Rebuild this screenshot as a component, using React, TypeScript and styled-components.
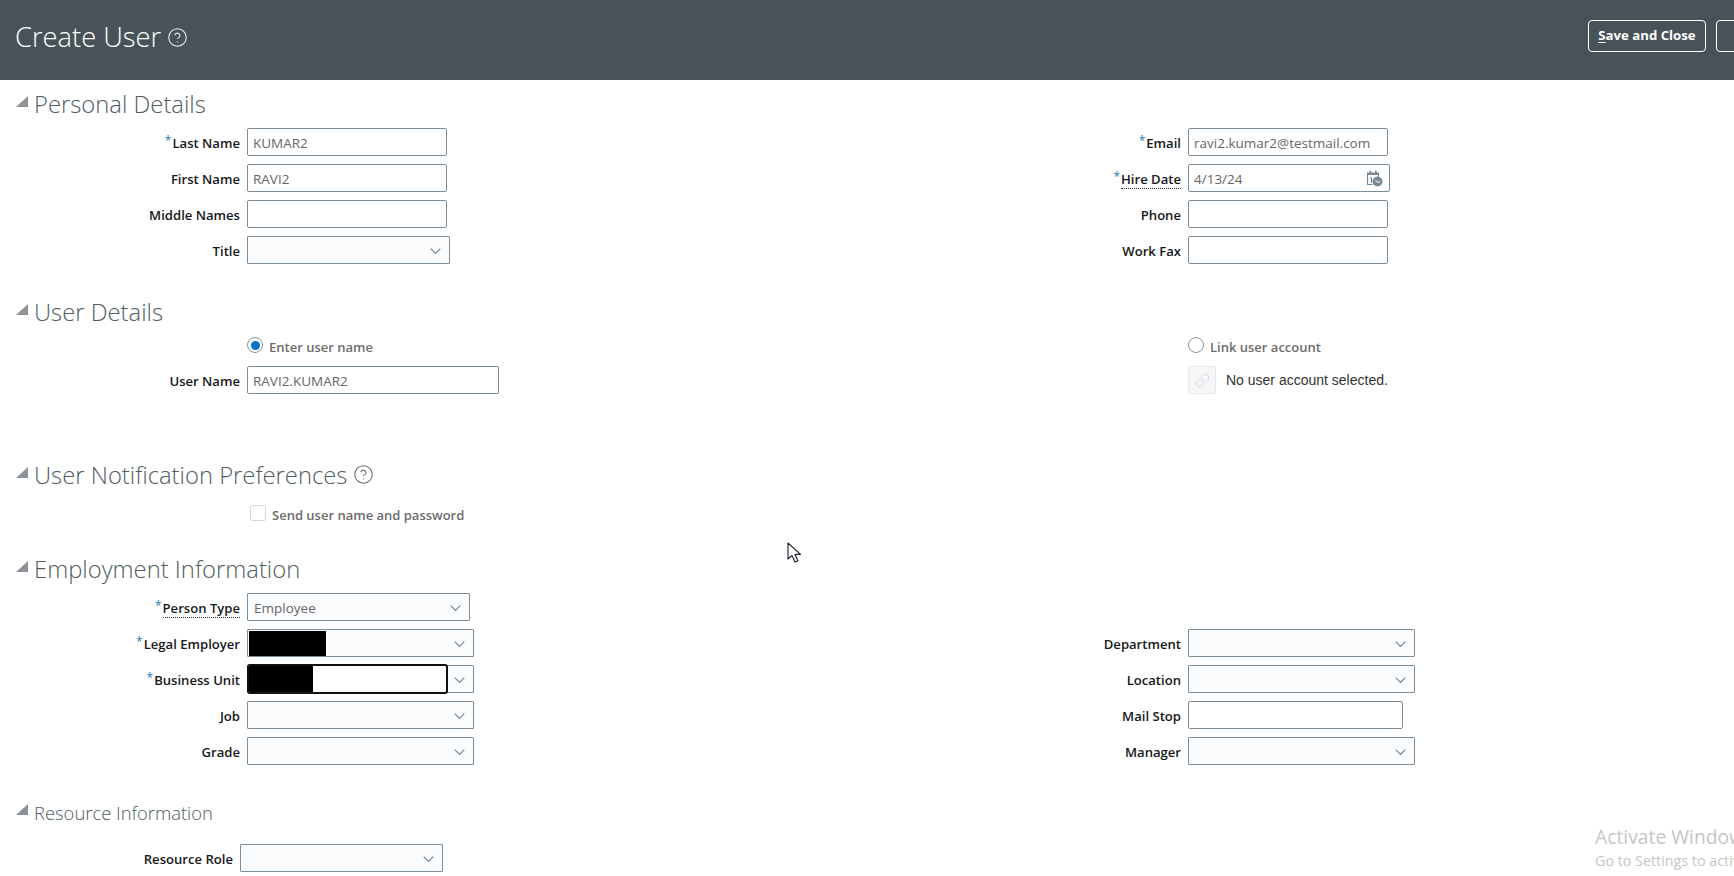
import React from 'react'
import styled, { createGlobalStyle } from 'styled-components'
import { CircleHelp, Link } from 'lucide-react'

const GlobalStyle = createGlobalStyle`
    html, body {
        margin: 0;
        padding: 0;
        background: #fff;
        overflow: hidden;
    }
    body {
        font-family: "Open Sans", "Noto Sans", "Liberation Sans", sans-serif;
    }
`
const Page = styled.div`
    position: relative;
    width: 1734px;
    height: 876px;
    overflow: hidden;
`
const Header = styled.header`
    height: 80px;
    background-color: #485359;
    display: flex;
    align-items: center;
    padding-left: 15px;
    margin-bottom: 9px;
`
const PageTitle = styled.h1`
    margin: 0 6px 0 0;
    font-size: 27.3px;
    font-weight: 300;
    color: #fff;
    line-height: 34px;
    position: relative;
    top: -3px;
`
const TitleHelp = styled(CircleHelp)`
    color: #f2f4f5;
    position: relative;
    top: -3px;
`
const Actions = styled.div`
    margin-left: auto;
    margin-right: -82px;
    display: flex;
    gap: 10px;
    position: relative;
    top: -4px;
`
const HeaderButton = styled.button<{ $width: number }>`
    width: ${(p) => p.$width}px;
    height: 32px;
    box-sizing: border-box;
    background: transparent;
    border: 1px solid #fff;
    border-radius: 4px;
    color: #fff;
    font-family: inherit;
    font-size: 13.2px;
    font-weight: 700;
    padding: 0 0 2px;
    u {
        text-underline-offset: 2px;
    }
`
const SectionHeading = styled.div<{ $top: number; $small?: boolean }>`
    display: flex;
    align-items: center;
    height: 30px;
    margin-top: ${(p) => p.$top}px;
    font-size: ${(p) => (p.$small ? 18.4 : 23.8)}px;
    font-weight: 300;
    color: #4f5c64;
`
const Twisty = styled.svg`
    width: 12px;
    height: 11px;
    margin: -5px 6px 0 16px;
    fill: #8b9398;
    flex-shrink: 0;
`
const HeadingHelp = styled(CircleHelp)`
    color: #5f6b72;
    margin-left: 6px;
    margin-top: -2px;
`
const Columns = styled.div<{ $top: number }>`
    display: flex;
    margin-top: ${(p) => p.$top}px;
`
const Column = styled.div<{ $width?: number }>`
    display: flex;
    flex-direction: column;
    gap: 8px;
    width: ${(p) => (p.$width ? `${p.$width}px` : 'auto')};
    flex-shrink: 0;
`
const Row = styled.div<{ $labelWidth: number }>`
    display: grid;
    grid-template-columns: ${(p) => p.$labelWidth}px auto;
    column-gap: 7px;
    align-items: center;
    justify-content: start;
    min-height: 28px;
`
const Label = styled.label`
    text-align: right;
    font-size: 13.1px;
    font-weight: 600;
    color: #16181a;
    line-height: 18px;
    position: relative;
    top: 1px;
    white-space: nowrap;
`
const Star = styled.span`
    color: #1f78b4;
    font-size: 12px;
    font-weight: 400;
    position: relative;
    top: -3px;
    margin-right: 1px;
`
const Dotted = styled.span`
    border-bottom: 1px dotted #333;
`
const TextBox = styled.div<{ $width: number }>`
    width: ${(p) => p.$width}px;
    height: 28px;
    box-sizing: border-box;
    border: 1px solid #7b8e9b;
    border-radius: 2px;
    background: #fff;
    padding: 0 5px;
    display: flex;
    align-items: center;
    justify-content: space-between;
    font-size: 13.5px;
    color: #666;
`
const ValueText = styled.span`
    position: relative;
    top: 1px;
`
const SelectBox = styled.div<{ $width: number }>`
    width: ${(p) => p.$width}px;
    height: 28px;
    box-sizing: border-box;
    border: 1px solid #7b8e9b;
    border-radius: 1px;
    background: #fbfcfe;
    display: flex;
    align-items: center;
    font-size: 13.5px;
    color: #666;
`
const SelectValue = styled.span`
    flex: 1;
    padding-left: 6px;
    position: relative;
    top: 1px;
`
const Redacted = styled.div`
    width: 77px;
    height: 25px;
    margin-left: 1px;
    background: #000;
`
const RedactedFill = styled.div`
    flex: 1;
`
const FocusedInput = styled.div`
    width: 201px;
    height: 30px;
    box-sizing: border-box;
    margin: -1px 0 -1px -1px;
    flex-shrink: 0;
    border: 2px solid #111;
    border-radius: 3px;
    background: #fff;
    display: flex;
    overflow: hidden;
`
const FocusedBlack = styled.div`
    width: 64px;
    background: #000;
`
const ChevronSvg = styled.svg`
    width: 11px;
    height: 7px;
    margin: 2px 8px 0 auto;
    fill: none;
    stroke: #6f7f8a;
    stroke-width: 1.1;
    flex-shrink: 0;
`
const CalendarSvg = styled.svg`
    width: 17px;
    height: 17px;
    margin-right: 1px;
    flex-shrink: 0;
`
const ChoiceRow = styled.div<{ $indent: number }>`
    display: flex;
    align-items: center;
    gap: 6px;
    height: 22px;
    margin: 0 0 2px ${(p) => p.$indent}px;
    font-size: 13px;
    font-weight: 600;
    color: #6c6c6c;
`
const ChoiceText = styled.span`
    position: relative;
    top: 2px;
`
const Radio = styled.span<{ $on?: boolean }>`
    width: 16px;
    height: 16px;
    box-sizing: border-box;
    border: 1px solid #8597a3;
    border-radius: 50%;
    display: flex;
    align-items: center;
    justify-content: center;
    &::after {
        content: '';
        display: ${(p) => (p.$on ? 'block' : 'none')};
        width: 9px;
        height: 9px;
        border-radius: 50%;
        background: #0572ce;
    }
`
const CheckBox = styled.span`
    width: 16px;
    height: 16px;
    box-sizing: border-box;
    border: 1px solid #d6d9dc;
    border-radius: 2px;
`
const LinkRow = styled.div<{ $indent: number }>`
    display: flex;
    align-items: center;
    gap: 10px;
    height: 28px;
    margin-left: ${(p) => p.$indent}px;
    font-family: "Liberation Sans", Arial, sans-serif;
    font-size: 14px;
    color: #333;
`
const LinkButton = styled.div`
    width: 28px;
    height: 28px;
    box-sizing: border-box;
    background: #f5f6f8;
    border: 1px solid #e6e8eb;
    border-radius: 2px;
    display: flex;
    align-items: center;
    justify-content: center;
    color: #d3d6da;
`
const Watermark = styled.div`
    position: absolute;
    left: 1595px;
    top: 823px;
    white-space: nowrap;
    color: #c6c6c6;
    font-size: 19.3px;
    font-weight: 400;
    line-height: 28px;
`
const WatermarkSub = styled.div`
    font-size: 14.3px;
    line-height: 19px;
`
const Cursor = styled.svg`
    position: absolute;
    left: 787px;
    top: 542px;
    width: 14px;
    height: 22px;
`

const Chevron = () => (
    <ChevronSvg viewBox="0 0 11 7">
        <polyline points="0.7,0.7 5.5,5.5 10.3,0.7" />
    </ChevronSvg>
)

const Heading = ({ children, top, small }: { children: React.ReactNode; top: number; small?: boolean }) => (
    <SectionHeading $top={top} $small={small}>
        <Twisty viewBox="0 0 12 11">
            <polygon points="12,0 12,11 0,11" />
        </Twisty>
        {children}
    </SectionHeading>
)

const Field = ({ label, required, dotted, labelWidth, children }: {
    label: string
    required?: boolean
    dotted?: boolean
    labelWidth: number
    children: React.ReactNode
}) => (
    <Row $labelWidth={labelWidth}>
        <Label>
            {required && <Star>*</Star>}
            {dotted ? <Dotted>{label}</Dotted> : label}
        </Label>
        {children}
    </Row>
)

const LEFT = 240
const RIGHT = 231

const App = () => {
    return (
        <Page>
            <GlobalStyle />
            <Header>
                <PageTitle>Create User</PageTitle>
                <TitleHelp size={21} strokeWidth={1.2} />
                <Actions>
                    <HeaderButton $width={118}><u>S</u>ave and Close</HeaderButton>
                    <HeaderButton $width={100} />
                </Actions>
            </Header>

            <Heading top={0}>Personal Details</Heading>
            <Columns $top={9}>
                <Column $width={950}>
                    <Field label="Last Name" required labelWidth={LEFT}>
                        <TextBox $width={200}><ValueText>KUMAR2</ValueText></TextBox>
                    </Field>
                    <Field label="First Name" labelWidth={LEFT}>
                        <TextBox $width={200}><ValueText>RAVI2</ValueText></TextBox>
                    </Field>
                    <Field label="Middle Names" labelWidth={LEFT}>
                        <TextBox $width={200} />
                    </Field>
                    <Field label="Title" labelWidth={LEFT}>
                        <SelectBox $width={203}><Chevron /></SelectBox>
                    </Field>
                </Column>
                <Column>
                    <Field label="Email" required labelWidth={RIGHT}>
                        <TextBox $width={200}><ValueText>ravi2.kumar2@testmail.com</ValueText></TextBox>
                    </Field>
                    <Field label="Hire Date" required dotted labelWidth={RIGHT}>
                        <TextBox $width={202}>
                            <ValueText>4/13/24</ValueText>
                            <CalendarSvg viewBox="0 0 17 17">
                                <path d="M1.5 3.5h11v3M1.5 3.5v11h5" fill="none" stroke="#7d8a93" strokeWidth="1.2" />
                                <rect x="1" y="2.5" width="12" height="2.5" fill="#7d8a93" />
                                <rect x="3.5" y="0.5" width="1.6" height="3" fill="#7d8a93" />
                                <rect x="9" y="0.5" width="1.6" height="3" fill="#7d8a93" />
                                <path d="M4 8h1.5v4.5" fill="none" stroke="#5f6b72" strokeWidth="1" />
                                <circle cx="11.5" cy="11.5" r="5" fill="#7d8a93" />
                                <path d="M9.5 10.5l2.2 1.6h2.5" fill="none" stroke="#fff" strokeWidth="1" />
                            </CalendarSvg>
                        </TextBox>
                    </Field>
                    <Field label="Phone" labelWidth={RIGHT}>
                        <TextBox $width={200} />
                    </Field>
                    <Field label="Work Fax" labelWidth={RIGHT}>
                        <TextBox $width={200} />
                    </Field>
                </Column>
            </Columns>

            <Heading top={33}>User Details</Heading>
            <Columns $top={7}>
                <Column $width={950}>
                    <div>
                        <ChoiceRow $indent={247}>
                            <Radio $on />
                            <ChoiceText>Enter user name</ChoiceText>
                        </ChoiceRow>
                    </div>
                    <Field label="User Name" labelWidth={LEFT}>
                        <TextBox $width={252}><ValueText>RAVI2.KUMAR2</ValueText></TextBox>
                    </Field>
                </Column>
                <Column>
                    <div>
                        <ChoiceRow $indent={238}>
                            <Radio />
                            <ChoiceText>Link user account</ChoiceText>
                        </ChoiceRow>
                    </div>
                    <LinkRow $indent={238}>
                        <LinkButton><Link size={15} strokeWidth={1.5} /></LinkButton>
                        No user account selected.
                    </LinkRow>
                </Column>
            </Columns>

            <Heading top={66}>
                User Notification Preferences
                <HeadingHelp size={21} strokeWidth={1.2} />
            </Heading>
            <Columns $top={12}>
                <ChoiceRow $indent={250}>
                    <CheckBox />
                    <ChoiceText>Send user name and password</ChoiceText>
                </ChoiceRow>
            </Columns>

            <Heading top={28}>Employment Information</Heading>
            <Columns $top={9}>
                <Column $width={950}>
                    <Field label="Person Type" required dotted labelWidth={LEFT}>
                        <SelectBox $width={223}><SelectValue>Employee</SelectValue><Chevron /></SelectBox>
                    </Field>
                    <Field label="Legal Employer" required labelWidth={LEFT}>
                        <SelectBox $width={227}><Redacted /><RedactedFill /><Chevron /></SelectBox>
                    </Field>
                    <Field label="Business Unit" required labelWidth={LEFT}>
                        <SelectBox $width={227}>
                            <FocusedInput><FocusedBlack /></FocusedInput>
                            <Chevron />
                        </SelectBox>
                    </Field>
                    <Field label="Job" labelWidth={LEFT}>
                        <SelectBox $width={227}><Chevron /></SelectBox>
                    </Field>
                    <Field label="Grade" labelWidth={LEFT}>
                        <SelectBox $width={227}><Chevron /></SelectBox>
                    </Field>
                </Column>
                <Column>
                    <Row $labelWidth={RIGHT} />
                    <Field label="Department" labelWidth={RIGHT}>
                        <SelectBox $width={227}><Chevron /></SelectBox>
                    </Field>
                    <Field label="Location" labelWidth={RIGHT}>
                        <SelectBox $width={227}><Chevron /></SelectBox>
                    </Field>
                    <Field label="Mail Stop" labelWidth={RIGHT}>
                        <TextBox $width={215} />
                    </Field>
                    <Field label="Manager" labelWidth={RIGHT}>
                        <SelectBox $width={227}><Chevron /></SelectBox>
                    </Field>
                </Column>
            </Columns>

            <Heading top={32} small>Resource Information</Heading>
            <Columns $top={17}>
                <Field label="Resource Role" labelWidth={233}>
                    <SelectBox $width={203}><Chevron /></SelectBox>
                </Field>
            </Columns>

            <Cursor viewBox="0 0 14 22">
                <path d="M1 1v16l4-3.5 3 6.5 3-1.3-3-6.3h5.5z" fill="#fff" stroke="#1c1f2b" strokeWidth="1.1" strokeLinejoin="round" />
            </Cursor>
            <Watermark>
                Activate Windows
                <WatermarkSub>Go to Settings to activate Windows.</WatermarkSub>
            </Watermark>
        </Page>
    )
}
export default App
